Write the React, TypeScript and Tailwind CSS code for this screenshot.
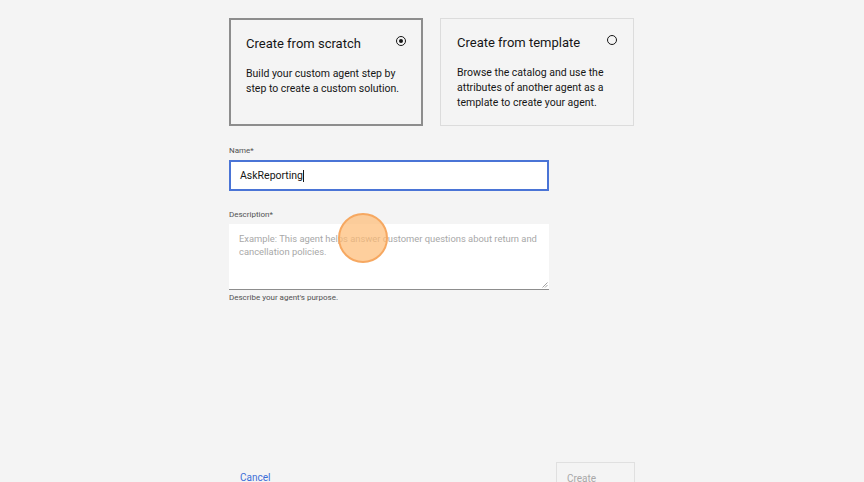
import React from "react";

function OptionCard({
  title,
  body,
  selected,
}: {
  title: string;
  body: string;
  selected?: boolean;
}) {
  return (
    <div
      className={`relative w-[194px] h-[108px] bg-[#f4f4f4] pr-[12px] ${
        selected ? "border-2 border-[#8d8d8d] pl-[15px] pt-[15px]" : "border border-[#dcdcdc] pl-[16px] pt-[15px]"
      }`}
    >
      <div
        className={`absolute w-[10px] h-[10px] rounded-full border border-[#161616] flex items-center justify-center ${
          selected ? "right-[15px] top-[16px]" : "right-[16px] top-[16px]"
        }`}
      >
        {selected && <div className="w-[4px] h-[4px] rounded-full bg-[#161616]" />}
      </div>
      <div className="text-[13px] leading-[18px] text-[#161616]">{title}</div>
      <p className={`${selected ? "mt-[13px]" : "mt-[13px]"} text-[10.5px] leading-[15px] text-[#161616]`}>{body}</p>
    </div>
  );
}

export default function App() {
  return (
    <div
      className="relative w-[864px] h-[482px] overflow-hidden bg-[#f4f4f4]"
      style={{ fontFamily: 'Roboto, "Noto Sans", sans-serif' }}
    >
      <div className="ml-[229px] pt-[18px] w-[406px]">
        <div className="flex gap-[17px]">
          <OptionCard
            selected
            title="Create from scratch"
            body="Build your custom agent step by step to create a custom solution."
          />
          <OptionCard
            title="Create from template"
            body="Browse the catalog and use the attributes of another agent as a template to create your agent."
          />
        </div>

        {/* Name field */}
        <label className="block mt-[20px] text-[8px] leading-[10px] text-[#525252]">Name*</label>
        <div className="mt-[4px] w-[320px] h-[31px] bg-white border-2 border-[#4a74d6] flex items-center pl-[9px]">
          <span className="text-[10.5px] text-[#161616]">AskReporting</span>
          <span className="w-px h-[12px] bg-[#161616]" />
        </div>

        {/* Description field */}
        <label className="block mt-[19px] text-[8px] leading-[10px] text-[#525252]">
          Description*
        </label>
        <div className="relative mt-[4px] w-[320px] h-[66px] bg-white border-b border-[#8d8d8d] px-[10px] pt-[8px]">
          <p className="text-[9.4px] leading-[13px] text-[#a8a8a8]">
            Example: This agent helps answer customer questions about return and cancellation policies.
          </p>
          <svg className="absolute right-[1px] bottom-[1px]" width="6" height="6" viewBox="0 0 6 6">
            <path d="M5.5 0.5 L0.5 5.5 M5.5 3 L3 5.5" stroke="#8d8d8d" strokeWidth="0.8" />
          </svg>
        </div>
        <p className="mt-[3px] text-[8px] leading-[10px] text-[#525252]">
          Describe your agent's purpose.
        </p>
      </div>

      {/* Footer actions */}
      <div className="absolute left-[229px] top-[462px] w-[406px] flex justify-between items-start">
        <button className="mt-[10px] ml-[11px] text-[10px] leading-[12px] text-[#3b6ed8]">Cancel</button>
        <button className="w-[79px] h-[30px] border border-[#e0e0e0] text-left pl-[10px] pt-[10px] flex items-start text-[10px] leading-[12px] text-[#a8a8a8]">
          Create
        </button>
      </div>

      {/* Click indicator overlay */}
      <div className="absolute left-[338px] top-[213px] w-[50px] h-[50px] rounded-full bg-[#fdba74]/70 border-2 border-[#f6a861]" />
    </div>
  );
}
